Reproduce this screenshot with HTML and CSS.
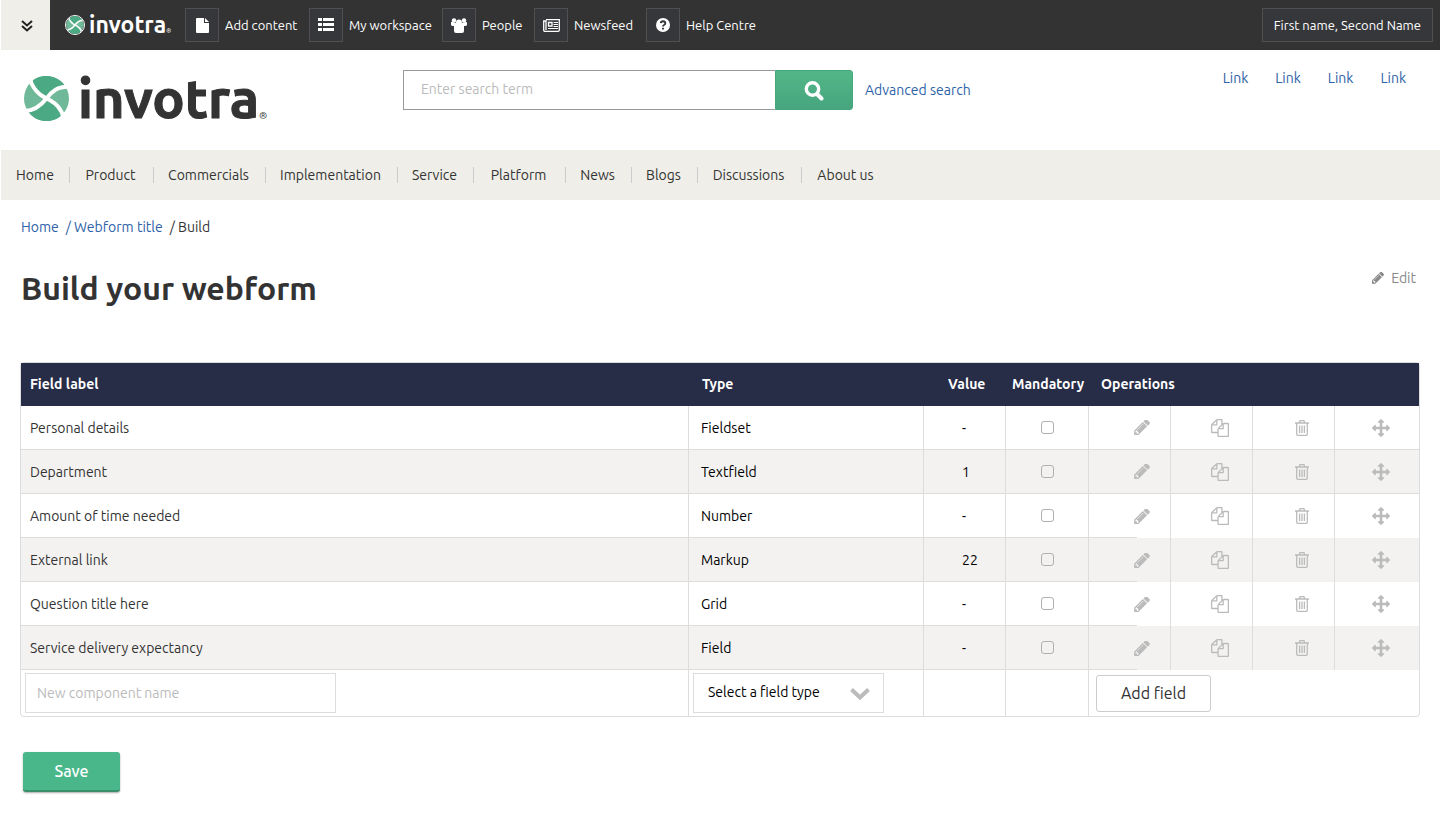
FILE: index.html
```html
<!DOCTYPE html>
<html lang="en">
<head>
<meta charset="utf-8">
<title>Build your webform</title>
<link rel="stylesheet" href="styles.css">
</head>
<body>
<svg class="sprite" aria-hidden="true">
  <symbol id="globe" viewBox="0 0 44 44">
    <circle cx="22" cy="22" r="22" fill="#70b998"/>
    <path d="M6 6.500A22 22 0 0 1 39.500 9C32 10 26.500 14.500 22.500 20C16.500 17.500 10 13 6 6.500ZM4.500 35.500C12 34 17.500 29.500 21.500 24C28 26.500 34 32 35.500 39.500A22 22 0 0 1 4.500 35.500Z" fill="#4ba983"/>
    <path d="M6 3.500C10 16 18 20 25 23.500C32.500 27.500 36.500 32 38.500 40M0 34.500C11 34 17 28.500 22 22C27.500 14.500 33 10.500 43 10.500" fill="none" stroke="currentColor" stroke-width="3.800"/>
  </symbol>
  <symbol id="pencil" viewBox="128 218 1515 1446"><path fill="currentColor" d="M491 1536l91-91-235-235-91 91v107h128v128h107zm523-928q0-22-22-22-10 0-17 7l-542 542q-7 7-7 17 0 22 22 22 10 0 17-7l542-542q7-7 7-17zm-54-192l416 416-832 832h-416v-416zm683 96q0 53-37 90l-166 166-416-416 166-165q36-38 90-38 53 0 91 38l235 234q37 39 37 91z"/></symbol>
  <symbol id="copy" viewBox="0 0 1792 1792"><path fill="currentColor" d="M1696 384q40 0 68 28t28 68v1216q0 40-28 68t-68 28h-960q-40 0-68-28t-28-68v-288h-544q-40 0-68-28t-28-68v-672q0-40 20-88t48-76l408-408q28-28 76-48t88-20h416q40 0 68 28t28 68v328q68-40 128-40h416zm-544 213l-299 299h299v-299zm-640-384l-299 299h299v-299zm196 647l316-316v-416h-384v416q0 40-28 68t-68 28h-416v640h512v-256q0-40 20-88t48-76zm956 804v-1152h-384v416q0 40-28 68t-68 28h-416v640h896z"/></symbol>
  <symbol id="trash" viewBox="0 0 14 16"><path fill="none" stroke="currentColor" stroke-width="1.300" d="M0 3H14M1.700 3V14Q1.700 15.300 3 15.300H11Q12.300 15.300 12.300 14V3M4.300 3L5 .7H9L9.700 3M4.600 5.500V13M7 5.500V13M9.400 5.500V13"/></symbol>
  <symbol id="move" viewBox="0 0 1792 1792"><path fill="currentColor" d="M1792 896q0 26-19 45l-256 256q-19 19-45 19t-45-19-19-45v-128h-384v384h128q26 0 45 19t19 45-19 45l-256 256q-19 19-45 19t-45-19l-256-256q-19-19-19-45t19-45 45-19h128v-384h-384v128q0 26-19 45t-45 19-45-19l-256-256q-19-19-19-45t19-45l256-256q19-19 45-19t45 19 19 45v128h384v-384h-128q-26 0-45-19t-19-45 19-45l256-256q19-19 45-19t45 19l256 256q19 19 19 45t-19 45-45 19h-128v384h384v-128q0-26 19-45t45-19 45 19l256 256q19 19 19 45z"/></symbol>
</svg>
<div class="page">
  <div class="topbar">
    <button class="toggle" type="button" aria-label="Expand toolbar"><svg width="12" height="12" viewBox="0 0 12 12" fill="none" stroke="#222" stroke-width="2"><path d="M1 1L6 5.500L11 1M1 6L6 10.500L11 6"/></svg></button>
    <a class="brand brand-small" href="#"><svg width="20" height="20"><use href="#globe"/></svg><span class="wordmark">invotra</span><span class="reg">®</span></a>
    <nav class="tools" aria-label="Tools">
      <a href="#"><span class="tile"><svg width="13" height="15" viewBox="0 0 13 15"><path fill="#fff" d="M1 0H8V5H13V14Q13 15 12 15H1Q0 15 0 14V1Q0 0 1 0ZM9 0L13 4H9Z"/></svg></span>Add content</a>
      <a href="#"><span class="tile"><svg width="16" height="14" viewBox="0 0 16 14"><path fill="#fff" d="M0 0H4V3H0ZM5 0H16V3H5ZM0 5H4V8H0ZM5 5H16V8H5ZM0 10H4V13H0ZM5 10H16V13H5Z"/></svg></span>My workspace</a>
      <a href="#"><span class="tile"><svg width="16" height="15" viewBox="0 0 16 15" fill="#fff"><circle cx="3" cy="2.500" r="2.200"/><circle cx="13" cy="2.500" r="2.200"/><circle cx="8" cy="4.500" r="3"/><path d="M0 4.500Q0 3.500 1.500 4L5 5L8 7L11 5L14.500 4Q16 3.500 16 5V6.500Q16 8 14 8H13V13Q13 15 11 15H5Q3 15 3 13V8H2Q0 8 0 6.500Z"/></svg></span>People</a>
      <a href="#"><span class="tile"><svg width="17" height="13" viewBox="0 0 17 13" fill="none" stroke="#fff"><path stroke-width="1.300" d="M3 .7H16.300V11Q16.300 12.300 15 12.300H2Q.7 12.300 .7 11V2H3V11"/><path stroke-width="1.300" d="M5.500 3.500H9V7H5.500Z"/><path d="M10.500 3.500H15M10.500 5.500H15M10.500 7.500H15M5 9.500H15"/></svg></span>Newsfeed</a>
      <a href="#"><span class="tile"><svg width="14" height="14" viewBox="0 0 14 14"><circle cx="7" cy="7" r="7" fill="#fff"/><path d="M4.700 5.200Q5 3.200 7 3.200Q9.300 3.300 9.300 5.200Q9.300 6.300 8 7Q7 7.500 7 8.600M7 9.700V11.400" fill="none" stroke="#36373b" stroke-width="1.900"/></svg></span>Help Centre</a>
    </nav>
    <button class="user" type="button">First name, Second Name</button>
  </div>
  <header class="header">
    <a class="brand brand-large" href="#"><svg width="45" height="45"><use href="#globe"/></svg><span class="wordmark">invotra</span><span class="reg">®</span></a>
    <form class="search">
      <input type="search" placeholder="Enter search term" aria-label="Enter search term">
      <button type="button" aria-label="Search"><svg width="22" height="22" viewBox="0 0 22 22" fill="none" stroke="#fff"><circle cx="9.500" cy="10" r="6.200" stroke-width="3.400"/><path d="M14.500 15.500L18.500 19.500" stroke-width="4" stroke-linecap="round"/></svg></button>
      <a href="#">Advanced search</a>
    </form>
    <nav class="quick" aria-label="Quick links"><a href="#">Link</a><a href="#">Link</a><a href="#">Link</a><a href="#">Link</a></nav>
  </header>
  <nav class="mainnav" aria-label="Main">
    <a href="#">Home</a><a href="#">Product</a><a href="#">Commercials</a><a href="#">Implementation</a><a href="#">Service</a><a href="#">Platform</a><a href="#">News</a><a href="#">Blogs</a><a href="#">Discussions</a><a href="#">About us</a>
  </nav>
  <main>
    <nav class="crumbs" aria-label="Breadcrumb"><a href="#">Home</a><a href="#">/ Webform title</a><span>/ Build</span></nav>
    <div class="titlebar">
      <h1>Build your webform</h1>
      <a class="edit" href="#"><svg width="12" height="12"><use href="#pencil"/></svg>Edit</a>
    </div>
    <table>
      <colgroup><col><col class="c-type"><col class="c-op"><col class="c-mand"><col class="c-op"><col class="c-op"><col class="c-op"><col class="c-last"></colgroup>
      <thead><tr><th>Field label</th><th class="type">Type</th><th class="value">Value</th><th class="mand">Mandatory</th><th class="ops" colspan="4">Operations</th></tr></thead>
      <tbody id="rows"></tbody>
      <tfoot><tr>
        <td class="new"><input class="name" type="text" placeholder="New component name" aria-label="New component name"></td>
        <td class="new"><span class="picker"><select aria-label="Field type"><option>Select a field type</option></select><svg width="20" height="12" viewBox="0 0 20 12" fill="none" stroke="#bbb" stroke-width="4"><path d="M1.500 1.500L10 9.500L18.500 1.500"/></svg></span></td>
        <td></td><td></td>
        <td class="add" colspan="4"><button type="button">Add field</button></td>
      </tr></tfoot>
    </table>
    <button class="save" type="button">Save</button>
  </main>
</div>
<script src="rows.js"></script>
</body>
</html>
```

FILE: styles.css
```css
* { box-sizing: border-box; }
body { margin: 0; background: #fff; color: #333; font: 14px/20px Ubuntu, "Noto Sans", sans-serif; }
button, input, select { font: inherit; }
button { cursor: pointer; }
a { color: #2e62a8; text-decoration: none; }
svg { display: block; flex: none; }
.sprite { position: absolute; width: 0; height: 0; }
.page { padding-left: 1px; }

.topbar { display: flex; align-items: center; height: 50px; background: #333; font-size: 13px; }
.toggle { display: flex; align-items: center; justify-content: center; width: 49px; height: 50px; padding: 1px 0 0 2px; border: 0; background: #efeee8; }
.brand { display: flex; align-items: center; }
.wordmark { font-family: Ubuntu, Roboto, sans-serif; font-weight: 700; }
.brand-small { width: 120px; margin-left: 15px; color: #fff; }
.brand-small svg { border: 1px solid #fff; border-radius: 50%; }
.brand-small .wordmark { margin-left: 4px; font-size: 23px; }
.reg { align-self: flex-end; }
.brand-small .reg { font-size: 6px; line-height: 8px; }
.tools { display: grid; grid-template-columns: 124px 133px 92px 112px auto; }
.tools a { display: flex; align-items: center; gap: 6px; color: #fff; white-space: nowrap; }
.tile { display: flex; align-items: center; justify-content: center; width: 34px; height: 34px; border: 1px solid #505050; background: #36373b; }
.user { height: 34px; margin: 0 7px 0 auto; padding: 0 11px; border: 1px solid #505050; background: #36373b; color: #fff; }

.header { display: flex; align-items: flex-start; height: 100px; padding: 20px 34px 0 23px; }
.brand-large { width: 379px; padding-top: 5px; color: #fff; }
.brand-large .wordmark { margin-left: 9px; color: #333; font-size: 54px; line-height: 46px; -webkit-text-stroke: 1px #333; }
.brand-large .reg { color: #333; font-size: 10px; line-height: 10px; }
.search { display: flex; align-items: center; }
.search input { width: 372px; height: 40px; padding: 0 17px 2px; border: 1px solid #999; border-right: 0; border-radius: 0; background: #fff; outline: 0; }
::placeholder { color: #bbb; opacity: 1; }
.search button { display: flex; align-items: center; justify-content: center; width: 78px; height: 40px; margin-right: 12px; border: 1px solid #45a57d; border-radius: 0 3px 3px 0; background: linear-gradient(#52b788, #46a57d); }
.quick { display: flex; gap: 27px; margin-left: auto; line-height: 16px; }

.mainnav { display: grid; grid-template-columns: 68px 84px 112px 132px 76px 92px 66px 66px 104px 90px; align-items: center; height: 50px; background: #efeee8; }
.mainnav a { padding-right: 2px; color: #333; line-height: 16px; text-align: center; border-left: 1px solid #ccc; }
.mainnav a:first-child { padding: 0; border-left: 0; }

main { padding: 17px 20px 40px 19px; }
.crumbs { display: flex; gap: 7px; padding-left: 1px; }
.titlebar { display: flex; justify-content: space-between; padding: 30px 0 0 1px; }
h1 { margin: 0; font-size: 32px; line-height: 42px; font-weight: 600; }
.edit { display: flex; align-items: center; gap: 7px; height: 20px; margin: 1px 4px 0 0; color: #888; }

table { width: 100%; margin-top: 53px; table-layout: fixed; border: 1px solid #ddd; border-radius: 4px; border-spacing: 0; }
.c-type { width: 235px; }
.c-op { width: 82px; }
.c-mand { width: 83px; }
.c-last { width: 85px; }
th { height: 43px; padding: 0 0 1px 9px; background: #272c47; color: #fff; text-align: left; }
th.type { padding-left: 14px; }
th.value { padding-left: 25px; }
th.mand { padding-left: 7px; }
th.ops { padding-left: 13px; }
tbody td { height: 44px; padding: 0 0 0 9px; border-bottom: 1px solid #ddd; }
tbody tr:nth-child(even) { background: #f3f2f1; }
td + td { border-left: 1px solid #ddd; }
tbody td.type { padding-left: 12px; color: #000; }
tbody td.value { padding-left: 38px; color: #000; }
tbody td.op { padding: 0; }
tbody tr:nth-child(n+3) td.op { border-bottom: 0; }
tbody tr:nth-child(n+3) td.op-edit { background: linear-gradient(#ddd, #ddd) left bottom / 48px 1px no-repeat; }
.op button { display: flex; align-items: center; justify-content: center; width: 100%; height: 32px; padding: 0 0 0 16px; border: 0; background: none; color: #bbb; }
.op-edit button { padding-left: 24px; }
.op-move button { padding-left: 8px; }
input[type="checkbox"] { display: block; appearance: none; width: 13px; height: 13px; margin: 0 auto; border: 1px solid #b0b0b0; border-radius: 3px; }
tbody td.mand { padding: 0; }
tfoot td { height: 46px; padding: 0 4px; }
.name { display: block; width: 311px; height: 40px; padding: 0 11px; border: 1px solid #ddd; border-radius: 0; background: #fff; }
.picker { position: relative; display: block; width: 191px; }
.picker select { display: block; width: 100%; height: 40px; padding: 0 40px 2px 14px; appearance: none; border: 1px solid #ddd; border-radius: 0; background: #fff; color: #000; }
.picker svg { position: absolute; right: 14px; top: 15px; pointer-events: none; }
tfoot td.add { padding-left: 7px; }
.add button { display: block; width: 115px; height: 37px; border: 1px solid #ccc; border-radius: 3px; background: #fff; color: #333; font-size: 16px; }
.save { display: block; width: 97px; height: 40px; margin: 35px 0 0 3px; border: 0; border-bottom: 2px solid #39906a; border-radius: 3px; background: #4ab78b; box-shadow: 0 1px 2px #aaa; color: #fff; font-size: 16px; font-weight: 500; }
```

FILE: rows.js
```javascript
const fields = [
  ['Personal details', 'Fieldset', '-'],
  ['Department', 'Textfield', '1'],
  ['Amount of time needed', 'Number', '-'],
  ['External link', 'Markup', '22'],
  ['Question title here', 'Grid', '-'],
  ['Service delivery expectancy', 'Field', '-']
];
const op = (cls, icon, w, h, label) =>
  `<td class="op op-${cls}"><button type="button" aria-label="${label}"><svg width="${w}" height="${h}"><use href="#${icon}"/></svg></button></td>`;
document.getElementById('rows').innerHTML = fields.map(([name, type, value]) =>
  `<tr><td>${name}</td><td class="type">${type}</td><td class="value">${value}</td>` +
  `<td class="mand"><input type="checkbox" aria-label="${name} mandatory"></td>` +
  op('edit', 'pencil', 16, 15, 'Edit ' + name) +
  op('copy', 'copy', 18, 18, 'Duplicate ' + name) +
  op('delete', 'trash', 14, 16, 'Delete ' + name) +
  op('move', 'move', 18, 18, 'Move ' + name) + '</tr>').join('');
```
